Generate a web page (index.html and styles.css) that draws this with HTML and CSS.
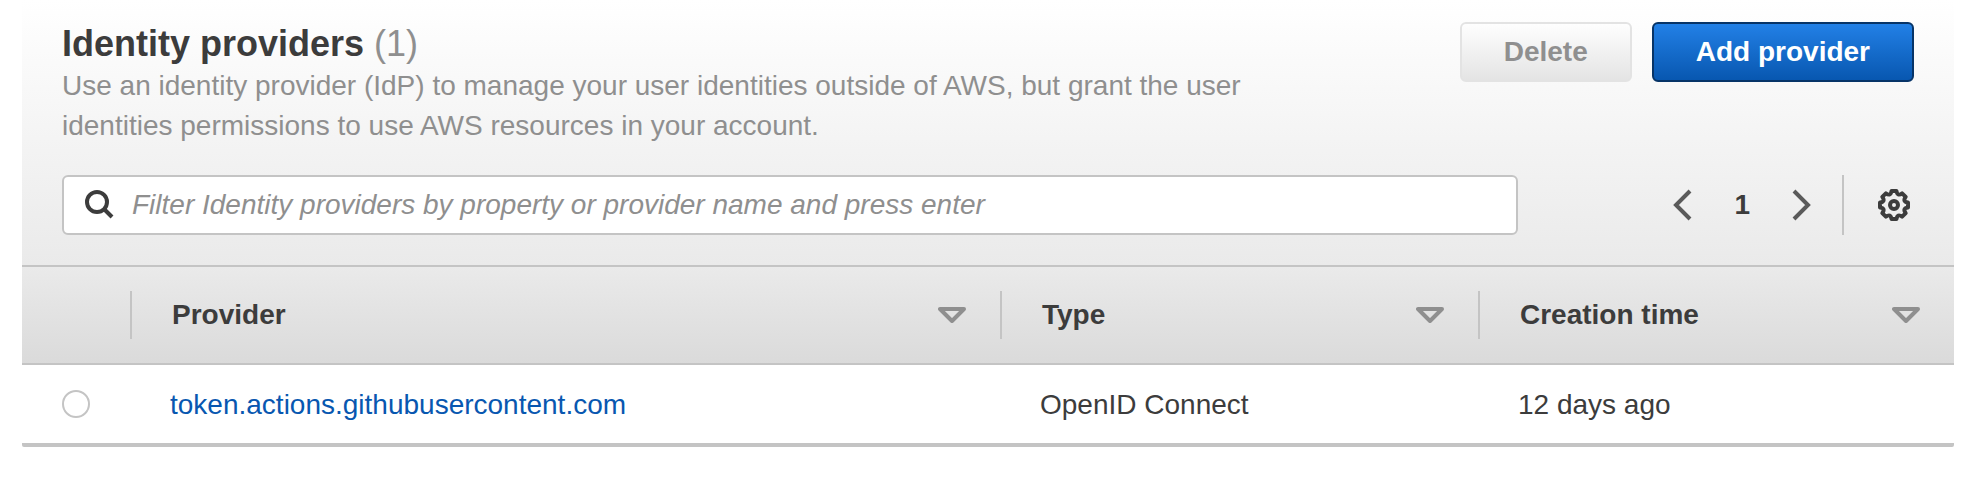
FILE: index.html
```html
<!DOCTYPE html>
<html lang="en">
<head>
    <meta charset="UTF-8">
    <meta name="viewport" content="width=device-width, initial-scale=1.0">
    <title>Identity providers</title>
    <link rel="stylesheet" href="styles.css">
</head>
<body>
    <main class="panel">
        <!-- Title, actions and filter -->
        <header class="panel-header">
            <div class="title-row">
                <div class="title-text">
                    <h1>Identity providers <span class="counter">(1)</span></h1>
                    <p class="description">Use an identity provider (IdP) to manage your user identities outside of AWS, but grant the user identities permissions to use AWS resources in your account.</p>
                </div>
                <div class="actions">
                    <button type="button" class="button" disabled>Delete</button>
                    <button type="button" class="button button-primary">Add provider</button>
                </div>
            </div>

            <div class="toolbar">
                <label class="search">
                    <svg class="search-icon" viewBox="0 0 32 32" aria-hidden="true">
                        <circle cx="13" cy="13" r="10"/>
                        <path d="M20 20l8 8"/>
                    </svg>
                    <input type="text" aria-label="Filter Identity providers" placeholder="Filter Identity providers by property or provider name and press enter">
                </label>
                <nav class="pagination" aria-label="Pagination">
                    <button type="button" class="icon-button" aria-label="Previous page">
                        <svg class="chevron" viewBox="0 0 20 32" aria-hidden="true"><path d="M17 2L3 16l14 14"/></svg>
                    </button>
                    <button type="button" class="icon-button page-number">1</button>
                    <button type="button" class="icon-button" aria-label="Next page">
                        <svg class="chevron" viewBox="0 0 20 32" aria-hidden="true"><path d="M3 2l14 14L3 30"/></svg>
                    </button>
                </nav>
                <div class="preferences">
                    <button type="button" class="icon-button" aria-label="Preferences">
                        <svg class="gear" viewBox="0 0 32 32" aria-hidden="true">
                            <path d="M13.5 2h5Q19.4 7.8 24.1 4.3L27.7 7.9Q24.2 12.6 30 13.5v5Q24.2 19.4 27.7 24.1L24.1 27.7Q19.4 24.2 18.5 30h-5Q12.6 24.2 7.9 27.7L4.3 24.1Q7.8 19.4 2 18.5v-5Q7.8 12.6 4.3 7.9L7.9 4.3Q12.6 7.8 13.5 2z"/>
                            <circle cx="16" cy="16" r="4"/>
                        </svg>
                    </button>
                </div>
            </div>
        </header>

        <!-- Providers list -->
        <table class="providers">
            <colgroup>
                <col class="col-select">
                <col class="col-provider">
                <col class="col-type">
                <col class="col-time">
            </colgroup>
            <thead>
                <tr>
                    <td></td>
                    <th scope="col">
                        <div class="column-title">Provider
                            <svg class="sort" viewBox="0 0 28 16" aria-hidden="true"><path d="M2 2h24L14 14z"/></svg>
                        </div>
                    </th>
                    <th scope="col">
                        <div class="column-title">Type
                            <svg class="sort" viewBox="0 0 28 16" aria-hidden="true"><path d="M2 2h24L14 14z"/></svg>
                        </div>
                    </th>
                    <th scope="col">
                        <div class="column-title">Creation time
                            <svg class="sort" viewBox="0 0 28 16" aria-hidden="true"><path d="M2 2h24L14 14z"/></svg>
                        </div>
                    </th>
                </tr>
            </thead>
            <tbody>
                <tr>
                    <td class="select-cell"><input type="radio" name="provider" aria-label="Select token.actions.githubusercontent.com"></td>
                    <td><a href="#provider">token.actions.githubusercontent.com</a></td>
                    <td>OpenID Connect</td>
                    <td>12 days ago</td>
                </tr>
            </tbody>
        </table>
    </main>
</body>
</html>
```
FILE: styles.css
```css
* {
    box-sizing: border-box;
}

body {
    font-family: "Liberation Sans", Arial, sans-serif;
    font-size: 28px;
    line-height: 40px;
    color: #3c3c3c;
    background-color: #fff;
    margin: 0;
}

button,
input {
    font: inherit;
    color: inherit;
    margin: 0;
}

.panel {
    margin: 0 24px 0 22px;
    border-bottom: 4px solid #c4c4c4;
    border-radius: 2px;
}

.panel-header {
    padding: 22px 40px 30px;
    background: linear-gradient(#fff, #eaeaea);
    border-bottom: 2px solid #c4c4c4;
}

.title-row {
    display: flex;
    justify-content: space-between;
    align-items: flex-start;
    gap: 40px;
}

h1 {
    font-size: 36px;
    line-height: 44px;
    margin: 0;
}

.counter {
    font-weight: normal;
    color: #8f8f8f;
}

.description {
    max-width: 1240px;
    margin: 0;
    color: #8f8f8f;
}

.actions {
    display: flex;
    gap: 20px;
}

.button {
    height: 60px;
    padding: 0 42px;
    border: 2px solid #c4c4c4;
    border-radius: 6px;
    background: linear-gradient(#fff, #e3e3e3);
    background-origin: border-box;
    font-weight: bold;
    white-space: nowrap;
    cursor: pointer;
}

.button:disabled {
    border-color: #e3e3e3;
    color: #8f8f8f;
    cursor: default;
}

.button-primary {
    border-color: #073467;
    background: linear-gradient(#2280e6, #0857b0);
    color: #fff;
}

/* Filter and pagination */
.toolbar {
    display: flex;
    align-items: center;
    margin-top: 29px;
}

.search {
    flex: 1;
    display: flex;
    align-items: center;
    gap: 16px;
    height: 60px;
    padding: 0 20px;
    border: 2px solid #c4c4c4;
    border-radius: 6px;
    background-color: #fff;
}

.search-icon {
    width: 32px;
    height: 32px;
    fill: none;
    stroke: #3c3c3c;
    stroke-width: 4;
}

.search input {
    flex: 1;
    min-width: 0;
    padding: 0;
    border: none;
    outline: none;
    background: none;
}

.search input::placeholder {
    color: #8f8f8f;
    font-style: italic;
    opacity: 1;
}

.pagination {
    display: flex;
    align-items: center;
    gap: 41px;
    padding: 0 31px 0 155px;
}

.icon-button {
    display: flex;
    align-items: center;
    padding: 0;
    border: none;
    background: none;
    cursor: pointer;
}

.page-number {
    font-weight: bold;
}

.chevron {
    width: 20px;
    height: 32px;
    fill: none;
    stroke: #5a5a5a;
    stroke-width: 4;
}

.preferences {
    display: flex;
    align-items: center;
    height: 60px;
    padding: 0 4px 0 34px;
    border-left: 2px solid #c4c4c4;
}

.gear {
    width: 32px;
    height: 32px;
    fill: none;
    stroke: #3c3c3c;
    stroke-width: 4;
    stroke-linejoin: round;
}

/* Table */
.providers {
    width: 100%;
    table-layout: fixed;
    border-collapse: separate;
    border-spacing: 0;
}

.col-select {
    width: 108px;
}

.col-type {
    width: 478px;
}

.col-time {
    width: 476px;
}

.providers th,
.providers td {
    padding: 0;
    text-align: left;
}

thead tr {
    background: linear-gradient(#eaeaea, #dadada);
}

.providers thead th,
.providers thead td {
    padding: 24px 0;
    border-bottom: 2px solid #c4c4c4;
}

.column-title {
    display: flex;
    justify-content: space-between;
    align-items: center;
    height: 48px;
    padding: 0 34px 0 40px;
    border-left: 2px solid #c4c4c4;
}

.sort {
    width: 28px;
    height: 16px;
    fill: none;
    stroke: #8f8f8f;
    stroke-width: 4;
    stroke-linejoin: round;
}

.providers tbody td {
    height: 78px;
    padding: 2px 0 0 40px;
}

.providers tbody .select-cell {
    padding-top: 0;
}

.providers a {
    color: #0857b0;
    text-decoration: none;
}

.providers a:hover {
    text-decoration: underline;
}

.providers input {
    display: block;
    appearance: none;
    width: 28px;
    height: 28px;
    border: 2px solid #c4c4c4;
    border-radius: 50%;
    background-color: #fff;
}

.providers input:checked {
    border: 8px solid #0857b0;
}
```
